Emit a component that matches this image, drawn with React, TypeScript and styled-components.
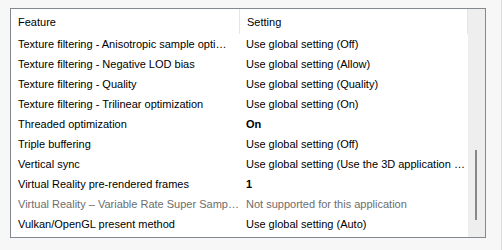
import React from 'react';
import styled, { createGlobalStyle } from 'styled-components';

const GlobalStyle = createGlobalStyle`
  html, body {
    margin: 0;
    padding: 0;
    background: #f7f7f7;
  }
`;

const Page = styled.div`
  width: 502px;
  height: 250px;
  box-sizing: border-box;
  padding: 8px 15px 0 10px;
  border-right: 1px solid #dcdcdc;
  font-family: "Liberation Sans", Arial, sans-serif;
  font-size: 11px;
  color: #000;
`;

const ListBox = styled.div`
  display: flex;
  height: 230px;
  box-sizing: border-box;
  border: 1px solid #828790;
  background: #fff;
  overflow: hidden;
`;

const Table = styled.div`
  flex: 1;
  display: flex;
  flex-direction: column;
  min-width: 0;
`;

const HeaderRow = styled.div`
  display: grid;
  grid-template-columns: 229px 228px 1px;
  height: 25px;
  flex-shrink: 0;
`;

const HeaderCell = styled.div`
  display: flex;
  align-items: center;
  padding-left: 7px;
  border-right: 1px solid #e5e5e5;
`;

const Row = styled.div`
  display: grid;
  grid-template-columns: 228px 1fr;
  height: 20px;
  flex-shrink: 0;
`;

const Cell = styled.div<{ $bold?: boolean; $muted?: boolean }>`
  display: flex;
  align-items: center;
  padding-left: 7px;
  white-space: nowrap;
  font-weight: ${p => (p.$bold ? 700 : 400)};
  color: ${p => (p.$muted ? '#6d6d6d' : '#000')};
`;

const Scrollbar = styled.div`
  width: 17px;
  flex-shrink: 0;
  background: #eeeeee;
  position: relative;
`;

const Thumb = styled.div`
  position: absolute;
  left: 7px;
  top: 141px;
  width: 2px;
  height: 70px;
  background: #888;
`;

type Setting = { feature: string; value: string; bold?: boolean; muted?: boolean };

// texts are shown as the list truncates them
const rows: Setting[] = [
  { feature: 'Texture filtering - Anisotropic sample opti\u2026', value: 'Use global setting (Off)' },
  { feature: 'Texture filtering - Negative LOD bias', value: 'Use global setting (Allow)' },
  { feature: 'Texture filtering - Quality', value: 'Use global setting (Quality)' },
  { feature: 'Texture filtering - Trilinear optimization', value: 'Use global setting (On)' },
  { feature: 'Threaded optimization', value: 'On', bold: true },
  { feature: 'Triple buffering', value: 'Use global setting (Off)' },
  { feature: 'Vertical sync', value: 'Use global setting (Use the 3D application \u2026' },
  { feature: 'Virtual Reality pre-rendered frames', value: '1', bold: true },
  { feature: 'Virtual Reality \u2013 Variable Rate Super Samp\u2026', value: 'Not supported for this application', muted: true },
  { feature: 'Vulkan/OpenGL present method', value: 'Use global setting (Auto)' },
];

export default function App() {
  return (
    <>
      <GlobalStyle />
      <Page>
        <ListBox>
          <Table>
            <HeaderRow>
              <HeaderCell>Feature</HeaderCell>
              <HeaderCell>Setting</HeaderCell>
              <div />
            </HeaderRow>
            {rows.map(r => (
              <Row key={r.feature}>
                <Cell $muted={r.muted}>{r.feature}</Cell>
                <Cell $muted={r.muted} $bold={r.bold}>{r.value}</Cell>
              </Row>
            ))}
          </Table>
          <Scrollbar>
            <Thumb />
          </Scrollbar>
        </ListBox>
      </Page>
    </>
  );
}
